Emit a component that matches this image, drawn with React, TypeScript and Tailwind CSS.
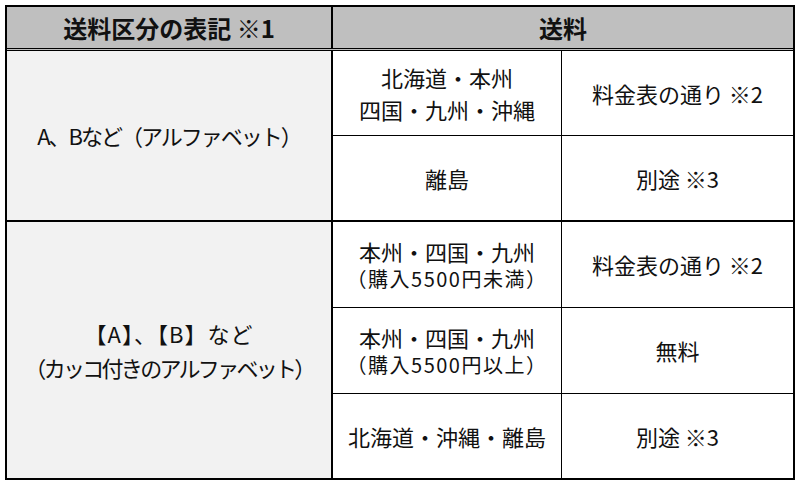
type Row = {
  area: React.ReactNode;
  fee: string;
  h: string;
  last?: boolean;
};

const group1: Row[] = [
  {
    area: (
      <div className="text-center leading-[32px]">
        <div>北海道・本州</div>
        <div>四国・九州・沖縄</div>
      </div>
    ),
    fee: "料金表の通り ※2",
    h: "h-[85px]",
  },
  { area: "離島", fee: "別途 ※3", h: "h-[84px]", last: true },
];

const group2: Row[] = [
  {
    area: (
      <div className="text-center leading-[27px]">
        <div>本州・四国・九州</div>
        <div className="text-[20px] tracking-[1.5px]">（購入5500円未満）</div>
      </div>
    ),
    fee: "料金表の通り ※2",
    h: "h-[86px]",
  },
  {
    area: (
      <div className="text-center leading-[27px]">
        <div>本州・四国・九州</div>
        <div className="text-[20px] tracking-[1.5px]">（購入5500円以上）</div>
      </div>
    ),
    fee: "無料",
    h: "h-[86px]",
  },
  { area: "北海道・沖縄・離島", fee: "別途 ※3", h: "h-[84px]", last: true },
];

function FeeRows({ rows }: { rows: Row[] }) {
  return (
    <div className="flex flex-1 flex-col">
      {rows.map((r, i) => (
        <div
          key={i}
          className={`flex ${r.h} ${r.last ? "" : "border-b border-black"}`}
        >
          <div className="flex w-[229px] items-center justify-center whitespace-nowrap border-r border-black">
            {r.area}
          </div>
          <div className="flex flex-1 items-center justify-center whitespace-nowrap">
            {r.fee}
          </div>
        </div>
      ))}
    </div>
  );
}

export default function App() {
  return (
    <div className="min-h-screen bg-white p-[5px] font-['Noto_Sans_CJK_JP','Noto_Sans_CJK_SC',sans-serif] text-[22px] text-[#111]">
      <div className="w-[790px] border-2 border-black">
        {/* header */}
        <div className="flex h-[44px] border-b-[3px] border-double border-black bg-[#bfbfbf] text-[24px] font-bold">
          <div className="flex w-[326px] items-center justify-center whitespace-nowrap border-r-2 border-black">
            送料区分の表記 ※1
          </div>
          <div className="flex flex-1 items-center justify-center">送料</div>
        </div>

        {/* alphabet */}
        <div className="flex border-b-2 border-black">
          <div className="flex w-[326px] items-center justify-center whitespace-nowrap border-r-2 border-black bg-[#f2f2f2] tracking-[-2px]">
            A、Bなど（アルファベット）
          </div>
          <FeeRows rows={group1} />
        </div>

        {/* bracketed alphabet */}
        <div className="flex">
          <div className="flex w-[326px] flex-col items-center justify-center whitespace-nowrap border-r-2 border-black bg-[#f2f2f2] leading-[34px]">
            <div className="tracking-[1px]">【A】、【B】など</div>
            <div className="tracking-[-2.7px]">（カッコ付きのアルファベット）</div>
          </div>
          <FeeRows rows={group2} />
        </div>
      </div>
    </div>
  );
}
